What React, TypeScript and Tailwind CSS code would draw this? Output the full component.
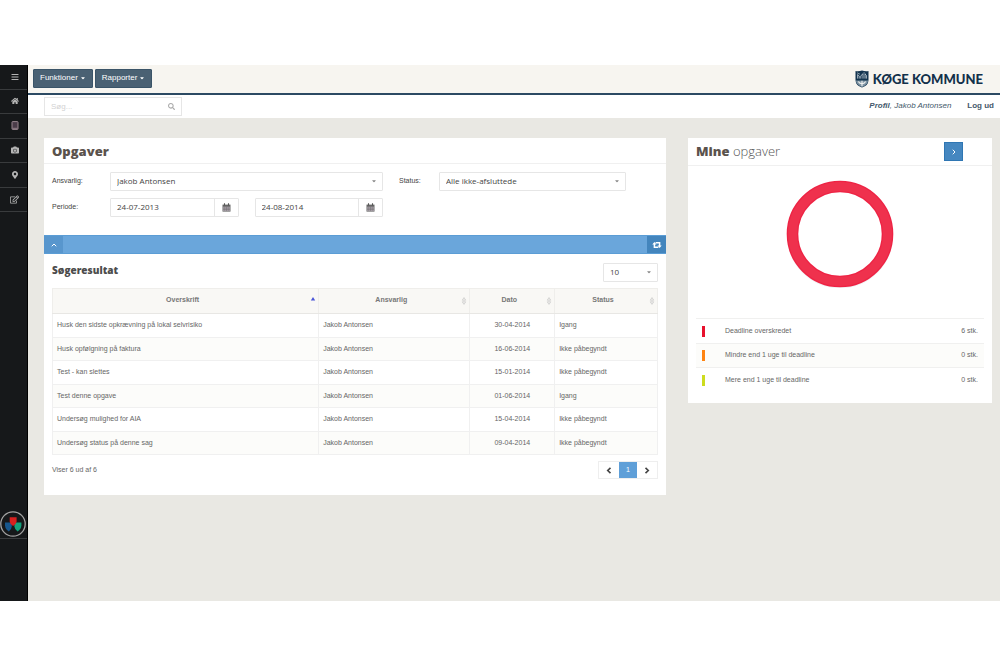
import React from "react";
import { FaBars, FaCamera, FaCaretDown, FaHome, FaMapMarkerAlt, FaRegEdit, FaSearch } from "react-icons/fa";
import { LuChevronRight, LuChevronUp } from "react-icons/lu";

const tasks = [
  ["Husk den sidste opkrævning på lokal selvrisiko", "Jakob Antonsen", "30-04-2014", "Igang"],
  ["Husk opfølgning på faktura", "Jakob Antonsen", "16-06-2014", "Ikke påbegyndt"],
  ["Test - kan slettes", "Jakob Antonsen", "15-01-2014", "Ikke påbegyndt"],
  ["Test denne opgave", "Jakob Antonsen", "01-06-2014", "Igang"],
  ["Undersøg mulighed for AIA", "Jakob Antonsen", "15-04-2014", "Ikke påbegyndt"],
  ["Undersøg status på denne sag", "Jakob Antonsen", "09-04-2014", "Ikke påbegyndt"],
];

const deadlines = [
  { label: "Deadline overskredet", count: "6 stk.", color: "bg-[#e8112d]" },
  { label: "Mindre end 1 uge til deadline", count: "0 stk.", color: "bg-[#ff8412]" },
  { label: "Mere end 1 uge til deadline", count: "0 stk.", color: "bg-[#cddc1e]" },
];

function TabletIcon() {
  return (
    <svg viewBox="0 0 8 9" className="h-[9px] w-2" aria-hidden="true">
      <rect x="1" y="0.6" width="6" height="7.8" rx="0.6" fill="#4a3c49" stroke="#98868f" strokeWidth="1" />
      <path d="M1.4 7.3 H6.6" stroke="#98868f" strokeWidth="0.9" />
    </svg>
  );
}

function CalendarIcon() {
  return (
    <svg viewBox="0 0 9 9" className="size-[9px]" aria-hidden="true">
      <path d="M0.5 1.6 H8.5 V8.6 H0.5Z" fill="#666" />
      <path d="M2.5 0.3 V2.4 M6.5 0.3 V2.4" stroke="#555" strokeWidth="1.1" />
      <path d="M1.2 3.7 H7.8 V8 H1.2Z" fill="#b4acb4" />
      <path d="M1 5.1 H8 M1 6.6 H8 M2.8 3.6 V8 M4.5 3.6 V8 M6.2 3.6 V8" stroke="#6d686d" strokeWidth="0.5" />
    </svg>
  );
}

function RetweetIcon() {
  return (
    <svg viewBox="0 0 10 8" className="h-2 w-2.5" aria-hidden="true">
      <path d="M2.4 3 V6.2 H6.4 M3.6 1.8 H7.6 V5" fill="none" stroke="#fff" strokeWidth="1.5" />
      <path d="M2.4 0.9 L4.5 3.6 H0.3Z M7.6 7.1 L5.5 4.4 H9.7Z" fill="#fff" />
    </svg>
  );
}

function PageArrow({ flip }: { flip?: boolean }) {
  return (
    <svg viewBox="0 0 6 7" className="h-[7px] w-1.5" aria-hidden="true">
      <path d={flip ? "M1.5 0.8 L4.3 3.5 L1.5 6.2" : "M4.5 0.8 L1.7 3.5 L4.5 6.2"} fill="none" stroke="#444" strokeWidth="1.6" />
    </svg>
  );
}

const navItems = [
  { label: "Menu", icon: <FaBars className="size-2" /> },
  { label: "Hjem", icon: <FaHome className="size-2" /> },
  { label: "Enheder", icon: <TabletIcon /> },
  { label: "Billeder", icon: <FaCamera className="size-2" /> },
  { label: "Steder", icon: <FaMapMarkerAlt className="size-2" /> },
  { label: "Rediger", icon: <FaRegEdit className="size-[9px]" /> },
];

function Crest() {
  return (
    <svg viewBox="0 0 14 18" className="h-[18px] w-3.5" aria-hidden="true">
      <path d="M0.5 1 Q4 1.6 7 0.4 Q10 1.6 13.5 1 V10 Q13.4 15.5 7 17.6 Q0.6 15.5 0.5 10Z" fill="#14344f" />
      <path d="M0.9 10.6 H13.1 Q12.6 15 7 17.2 Q1.4 15 0.9 10.6Z" fill="#7d93a3" />
      <path d="M2.6 8.6 V4.6 L4.2 6 V8.6 M5.8 8.6 V6 L8 3.6 V8.6 M10 8.6 V4 L11.4 5.4 V8.6" fill="none" stroke="#c9d4dc" strokeWidth="0.8" />
      <path d="M2 2.8 L5 4.2 M8.6 2.6 L10.4 3.4" stroke="#9db0bd" strokeWidth="0.8" />
      <path d="M1.8 9.6 H12.2" stroke="#14344f" strokeWidth="1" />
      <path d="M7 10.8 V16 M3.4 11.6 Q4.4 13.8 7 13.6 Q9.6 13.8 10.6 11.6" fill="none" stroke="#f0f1ef" strokeWidth="1.1" />
    </svg>
  );
}

function ShieldsLogo() {
  return (
    <svg viewBox="0 0 26 28" className="h-7 w-[26px]" aria-hidden="true">
      <circle cx="13" cy="14" r="12.2" fill="#16181a" stroke="#a3a3a3" strokeWidth="1.3" />
      <path d="M5 12.6 H11.8 V16.6 Q11.4 20 8.8 21.4 Q5.4 19.8 5 15.6Z" fill="#17568c" />
      <path d="M14.4 12.6 H21.4 V15.6 Q21 19.8 17.6 21.4 Q14.8 20 14.4 16.6Z" fill="#12a17c" />
      <path d="M9.7 7.2 H16.6 V11.4 Q16.2 14.6 13.1 16 Q10 14.6 9.7 11.4Z" fill="#d6201f" />
    </svg>
  );
}

function Select({ id, value, label }: { id: string; value: string; label?: string }) {
  return (
    <div className="relative h-[19px]">
      <select
        id={id}
        aria-label={label}
        className="block h-full w-full appearance-none rounded-[1px] border border-[#e6e6e6] bg-white pb-0.5 pl-1.5 font-['Open_Sans',sans-serif] text-[8px] text-[#444]"
      >
        <option>{value}</option>
      </select>
      <FaCaretDown className="pointer-events-none absolute top-1.5 right-1.5 size-1.5 text-[#888]" />
    </div>
  );
}

function DateField({ id, label, value }: { id: string; label: string; value: string }) {
  return (
    <div className="flex h-[19px] rounded-[1px] border border-[#e6e6e6]">
      <input
        id={id}
        aria-label={label}
        defaultValue={value}
        className="w-0 min-w-0 flex-1 bg-white pb-0.5 pl-1.5 font-['Open_Sans',sans-serif] text-[8px] text-[#444]"
      />
      <button type="button" aria-label="Vælg dato" className="flex w-6 items-center justify-center border-l border-[#e6e6e6]">
        <CalendarIcon />
      </button>
    </div>
  );
}

function SortMark({ active }: { active?: boolean }) {
  return (
    <svg viewBox="0 0 6 8" className="absolute top-2 right-0.5 h-2 w-1.5" aria-hidden="true">
      {active ? (
        <path d="M3 0 L5.2 3.6 H0.8Z" fill="#4a55d8" />
      ) : (
        <path d="M3 0.6 L4.7 3.2 H1.3Z M3 7.4 L4.7 4.8 H1.3Z" fill="#f9f8f5" stroke="#c4c4c4" strokeWidth="0.7" />
      )}
    </svg>
  );
}

function HeadCell({ label, width, active }: { label: string; width: string; active?: boolean }) {
  return (
    <th className={`${width} relative border border-[#efeeeb] border-b-[#e8e7e4] pr-2.5 pb-0.5 pl-1 text-center font-bold text-[#777]`}>
      {label}
      <SortMark active={active} />
    </th>
  );
}

function TaskPanel() {
  return (
    <section className="bg-white pb-4">
      <h1 className="h-[26px] border-b border-[#f0f0f0] px-2 font-['Open_Sans',sans-serif] text-[13px] leading-[26px] font-extrabold text-[#5a524c]">
        Opgaver
      </h1>
      <form className="grid grid-cols-[58px_minmax(0,273fr)_56px_minmax(0,187fr)_32px] items-center gap-y-[7px] px-2 pt-2 pb-[18px] text-[7px] text-[#444]">
        <label htmlFor="owner">Ansvarlig:</label>
        <Select id="owner" value="Jakob Antonsen" />
        <label htmlFor="status" className="pl-4">Status:</label>
        <Select id="status" value="Alle ikke-afsluttede" />
        <label htmlFor="from" className="col-start-1">Periode:</label>
        <div className="grid grid-cols-2 gap-4">
          <DateField id="from" label="Periode fra" value="24-07-2013" />
          <DateField id="to" label="Periode til" value="24-08-2014" />
        </div>
      </form>
      <div className="flex h-[19px] justify-between border-y border-[#5b9dd5] bg-[#6aa6db] text-white">
        <button aria-label="Skjul søgning" className="flex w-[19px] items-center justify-center bg-[#5896cd]">
          <LuChevronUp className="size-2" strokeWidth={3} />
        </button>
        <button aria-label="Opdater" className="flex w-[19px] items-center justify-center bg-[#4385bd]">
          <RetweetIcon />
        </button>
      </div>
      <div className="px-2 pt-[9px]">
        <div className="mb-1.5 flex items-center justify-between">
          <h2 className="pb-1.5 font-['Open_Sans',sans-serif] text-[10px] leading-3 font-extrabold text-[#4c4c4c]">Søgeresultat</h2>
          <div className="w-[55px]">
            <Select id="size" label="Antal pr. side" value="10" />
          </div>
        </div>
        <table className="h-[167px] w-full table-fixed border-collapse text-[7px] leading-[10px] text-[#666]">
          <thead>
            <tr className="h-[25px] bg-[#f9f8f5]">
              <HeadCell label="Overskrift" width="w-[44%]" active />
              <HeadCell label="Ansvarlig" width="w-[25%]" />
              <HeadCell label="Dato" width="w-[14%]" />
              <HeadCell label="Status" width="w-[17%]" />
            </tr>
          </thead>
          <tbody>
            {tasks.map(([title, owner, date, status]) => (
              <tr key={title} className="even:bg-[#fcfcfa]">
                <td className="border border-[#f0f0f0] px-1">{title}</td>
                <td className="border border-[#f0f0f0] px-1">{owner}</td>
                <td className="border border-[#f0f0f0] px-1 text-center">{date}</td>
                <td className="border border-[#f0f0f0] px-1">{status}</td>
              </tr>
            ))}
          </tbody>
        </table>
        <div className="mt-1.5 flex items-center justify-between text-[7px] text-[#666]">
          <p>Viser 6 ud af 6</p>
          <nav aria-label="Sider" className="flex h-[18px] border border-[#eee]">
            <button aria-label="Forrige" className="flex w-5 items-center justify-center">
              <PageArrow />
            </button>
            <button className="w-[18px] bg-[#5f9fd8] text-white">1</button>
            <button aria-label="Næste" className="flex w-5 items-center justify-center">
              <PageArrow flip />
            </button>
          </nav>
        </div>
      </div>
    </section>
  );
}

function DeadlinePanel() {
  return (
    <section className="bg-white pb-[11px]">
      <div className="flex h-7 items-center justify-between border-b border-[#f0f0f0] pr-[29px] pl-2">
        <h2 className="pb-0.5 font-['Open_Sans',sans-serif] text-[13px] leading-6 font-light text-[#555]">
          <strong className="font-extrabold text-[#5a524c]">Mine</strong> opgaver
        </h2>
        <button aria-label="Vis mine opgaver" className="flex size-[19px] items-center justify-center border border-[#2f76b3] bg-[#4587c0] text-white">
          <LuChevronRight className="size-2" strokeWidth={3} />
        </button>
      </div>
      <div className="flex justify-center pt-[14px] pb-[30px]">
        <svg viewBox="0 0 108 108" className="size-[108px]" role="img" aria-label="Deadline overskredet: 6">
          <circle cx="54" cy="55.5" r="51" fill="none" stroke="#f1f4f5" strokeWidth="4" />
          <circle cx="54" cy="54" r="47.5" fill="#fff" stroke="#ee2344" strokeWidth="11.6" />
          <circle cx="54" cy="54" r="47.5" fill="none" stroke="#ef314d" strokeWidth="9" />
        </svg>
      </div>
      <ul className="mx-2 text-[7px] text-[#666]">
        {deadlines.map((d) => (
          <li key={d.label} className="flex h-[25px] items-center border-t border-[#f0f0ef] px-1.5 even:h-6 even:bg-[#fcfcfa]">
            <span className={`h-[11px] w-[3px] ${d.color}`} />
            <span className="flex-1 pl-5">{d.label}</span>
            <span>{d.count}</span>
          </li>
        ))}
      </ul>
    </section>
  );
}

export default function App() {
  return (
    <div className="min-h-screen bg-white py-[65px] font-['Liberation_Sans',Arial,sans-serif]">
      <div className="flex min-h-[536px]">
        <aside className="flex w-7 shrink-0 flex-col border-r border-black bg-[#16181a]">
          <nav aria-label="Hovedmenu" className="grid h-[147px] grid-rows-6">
            {navItems.map((item) => (
              <button key={item.label} aria-label={item.label} className="flex items-center justify-center border-b border-[#393b3d] pl-0.5 text-[#b5b5b5]">
                {item.icon}
              </button>
            ))}
          </nav>
          <div className="mt-auto mb-[62px] border-b border-[#393b3d]">
            <ShieldsLogo />
          </div>
        </aside>
        <div className="flex min-w-0 flex-1 flex-col bg-[#e9e8e3]">
          <header className="flex h-[30px] items-center justify-between border-b-2 border-[#2c4a63] bg-[#f7f5f0] pr-[17px] pl-[5px]">
            <nav aria-label="Funktioner" className="flex gap-0.5 pb-0.5 text-[8px] text-white">
              <button className="flex h-[19px] items-center gap-0.5 rounded-[1px] border border-[#3a5468] bg-[#4a6173] px-1.5">
                Funktioner <FaCaretDown className="size-1.5" />
              </button>
              <button className="flex h-[19px] items-center gap-0.5 rounded-[1px] border border-[#3a5468] bg-[#4a6173] px-1.5">
                Rapporter <FaCaretDown className="size-1.5" />
              </button>
            </nav>
            <div className="flex items-center gap-1">
              <Crest />
              <span className="font-[Lato,sans-serif] text-[13px] leading-4 font-black text-[#12304a]">KØGE KOMMUNE</span>
            </div>
          </header>
          <div className="flex h-[23px] items-center justify-between bg-white pr-1.5 pl-4">
            <div className="flex h-[19px] w-[138px] items-center border border-[#e6e6e6] pr-1.5">
              <input type="search" aria-label="Søg" placeholder="Søg..." className="w-0 min-w-0 flex-1 pl-1.5 text-[8px] placeholder:text-[#d2d2d2]" />
              <FaSearch className="size-[7px] text-[#aaa]" />
            </div>
            <div className="flex gap-4 pb-0.5 text-[8px] text-[#44596b]">
              <a href="#profil" className="italic"><strong>Profil</strong>, Jakob Antonsen</a>
              <a href="#logud" className="font-bold">Log ud</a>
            </div>
          </div>
          <main className="grid grid-cols-[minmax(0,622fr)_minmax(0,304fr)] items-start gap-[22px] pt-5 pr-2 pl-4">
            <TaskPanel />
            <DeadlinePanel />
          </main>
        </div>
      </div>
    </div>
  );
}
